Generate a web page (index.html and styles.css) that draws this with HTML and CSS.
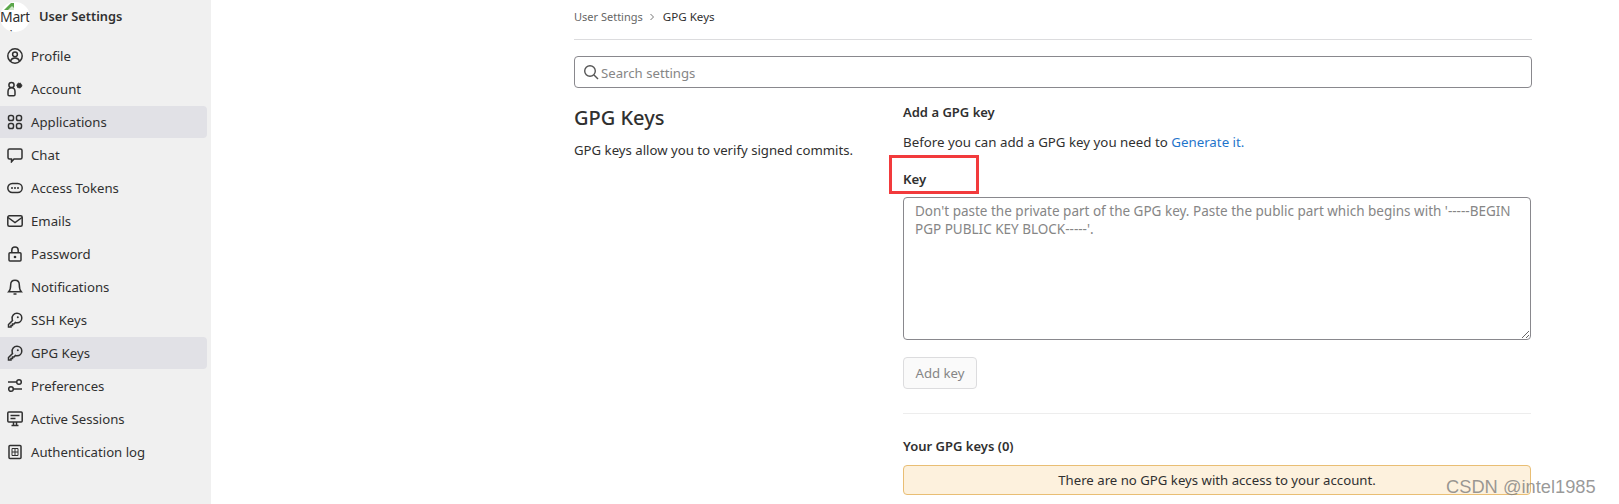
FILE: index.html
```html
<!DOCTYPE html>
<html>
<head>
    <title>GPG Keys</title>
    <meta name="viewport" content="width=device-width, initial-scale=1.0">
    <link rel="stylesheet" href="styles.css">
</head>
<body>
    <div class="page">
        <aside class="sidebar">
            <div class="context">
                <div class="avatar">
                    <svg class="broken" width="14" height="7" viewBox="0 0 14 7"><path d="M2 7 L9 0 L12 0 L12 7 Z" fill="#5aa64a"/><path d="M6 7 L10 3 L12 5 L12 7 Z" fill="#cfe6c8"/></svg>
                    <span>Mart in</span>
                </div>
                <strong>User Settings</strong>
            </div>
            <nav class="nav">
                <a class="nav-item">
                    <svg class="icon" viewBox="0 0 16 16"><circle cx="8" cy="8" r="7.2"/><circle cx="8" cy="6.3" r="2.4"/><path d="M3.5 13c.8-2.2 2.4-3 4.5-3s3.700.8 4.500 3"/></svg>
                    Profile
                </a>
                <a class="nav-item">
                    <svg class="icon" viewBox="0 0 16 16"><circle cx="4.500" cy="4" r="2.600"/><path d="M4.500 6.800c-2.200 0-3.500 1.800-3.500 4v2.700c0 .8.600 1.300 1.200 1.300h4.600c.6 0 1.200-.5 1.200-1.300v-2.700c0-2.200-1.300-4-3.500-4z"/><circle class="gear" cx="12.300" cy="4.500" r="2.500"/></svg>
                    Account
                </a>
                <a class="nav-item active">
                    <svg class="icon" viewBox="0 0 16 16"><rect x="1.500" y="1.500" width="5" height="5" rx="1.800"/><rect x="9.500" y="1.500" width="5" height="5" rx="1.800"/><rect x="1.500" y="9.500" width="5" height="5" rx="1.800"/><rect x="9.500" y="9.500" width="5" height="5" rx="1.800"/></svg>
                    Applications
                </a>
                <a class="nav-item">
                    <svg class="icon" viewBox="0 0 16 16"><path d="M2.500 2h11A1.500 1.500 0 0 1 15 3.500v7a1.500 1.500 0 0 1-1.500 1.500H7l-2.500 2.800V12h-2A1.500 1.500 0 0 1 1 10.500v-7A1.500 1.500 0 0 1 2.500 2z"/></svg>
                    Chat
                </a>
                <a class="nav-item">
                    <svg class="icon" viewBox="0 0 16 16"><rect x="0.800" y="3.500" width="14.400" height="9" rx="4.500"/><circle class="solid" cx="5" cy="8" r="1"/><circle class="solid" cx="8" cy="8" r="1"/><circle class="solid" cx="11" cy="8" r="1"/></svg>
                    Access Tokens
                </a>
                <a class="nav-item">
                    <svg class="icon" viewBox="0 0 16 16"><rect x="0.800" y="2.800" width="14.400" height="10.400" rx="1.500"/><path d="M1 4.500l7 5 7-5"/></svg>
                    Emails
                </a>
                <a class="nav-item">
                    <svg class="icon" viewBox="0 0 16 16"><rect x="2" y="6.800" width="12" height="8.200" rx="1"/><path d="M4.800 6.800V4.200a3.200 3.200 0 0 1 6.400 0v2.600"/><circle class="solid" cx="8" cy="11" r="1.300"/></svg>
                    Password
                </a>
                <a class="nav-item">
                    <svg class="icon" viewBox="0 0 16 16"><path d="M8 1.200c-2.700 0-4.300 2-4.300 4.500 0 3.500-.6 5.500-2 7h12.600c-1.400-1.500-2-3.500-2-7 0-2.500-1.600-4.500-4.300-4.500z"/><path d="M6.500 15h3"/></svg>
                    Notifications
                </a>
                <a class="nav-item">
                    <svg class="icon" viewBox="0 0 16 16"><path d="M10 1.200a4.800 4.800 0 0 1 0 9.600c-.6 0-1.100-.1-1.600-.3L7 12H5.500v1.500H4V15H1.500v-2.500l4-4c-.2-.5-.3-1-.3-1.500A4.800 4.800 0 0 1 10 1.200z"/><circle class="solid" cx="10.800" cy="5.200" r="1"/></svg>
                    SSH Keys
                </a>
                <a class="nav-item active">
                    <svg class="icon" viewBox="0 0 16 16"><path d="M10 1.200a4.800 4.800 0 0 1 0 9.600c-.6 0-1.100-.1-1.600-.3L7 12H5.500v1.500H4V15H1.500v-2.500l4-4c-.2-.5-.3-1-.3-1.500A4.800 4.800 0 0 1 10 1.200z"/><circle class="solid" cx="10.800" cy="5.200" r="1"/></svg>
                    GPG Keys
                </a>
                <a class="nav-item">
                    <svg class="icon" viewBox="0 0 16 16"><path d="M1 4h8.700M6.300 11H15"/><circle cx="12" cy="4" r="2.300"/><circle cx="4" cy="11" r="2.300"/></svg>
                    Preferences
                </a>
                <a class="nav-item">
                    <svg class="icon" viewBox="0 0 16 16"><rect x="0.800" y="1" width="14.400" height="10" rx="1"/><path d="M3.500 4.500h9M3.500 7.500h5M6.500 11v3M9.500 11v3M4.500 14.500h7"/></svg>
                    Active Sessions
                </a>
                <a class="nav-item">
                    <svg class="icon" viewBox="0 0 16 16"><rect x="2" y="1.500" width="12" height="13" rx="1"/><path class="thin" d="M5 4.500h6v7H5zM5 8h6M8 4.500v7"/></svg>
                    Authentication log
                </a>
            </nav>
        </aside>

        <main class="content">
            <div class="breadcrumbs">
                <span class="crumb">User Settings</span>
                <svg class="chevron" viewBox="0 0 8 8"><path d="M2.500 1l3 3-3 3"/></svg>
                <span class="crumb-current">GPG Keys</span>
            </div>

            <div class="search-box">
                <svg class="search-icon" viewBox="0 0 16 16"><circle cx="7" cy="7" r="5.300"/><path d="M11 11l4 4"/></svg>
                <span class="search-text">Search settings</span>
            </div>

            <div class="columns">
                <div class="intro">
                    <h2>GPG Keys</h2>
                    <p>GPG keys allow you to verify signed commits.</p>
                </div>
                <div class="panel">
                    <h5>Add a GPG key</h5>
                    <p class="before">Before you can add a GPG key you need to <a class="link">Generate it.</a></p>
                    <label class="key-label">Key</label>
                    <textarea class="key-input" placeholder="Don't paste the private part of the GPG key. Paste the public part which begins with '-----BEGIN PGP PUBLIC KEY BLOCK-----'."></textarea>
                    <button class="add-btn" disabled>Add key</button>
                    <hr class="divider">
                    <h5 class="keys-title">Your GPG keys (0)</h5>
                    <div class="empty-alert">There are no GPG keys with access to your account.</div>
                </div>
            </div>
        </main>
    </div>

    <div class="highlight"></div>
    <div class="watermark">CSDN @intel1985</div>
</body>
</html>
```

FILE: styles.css
```css
* {
    box-sizing: border-box;
}

html, body {
    height: 100%;
}

body {
    margin: 0;
    font-family: "Noto Sans", sans-serif;
    font-size: 13.2px;
    color: #303030;
    background: #fff;
    overflow: hidden;
    position: relative;
}

.page {
    display: flex;
    height: 504px;
}

/* Sidebar */
.sidebar {
    width: 211px;
    flex-shrink: 0;
    background: #f0f0f0;
}

.context {
    display: flex;
    align-items: center;
    gap: 9px;
    height: 32px;
    margin-bottom: 8px;
}

.context strong {
    font-size: 12.8px;
    font-weight: 600;
}

.avatar {
    position: relative;
    width: 30px;
    height: 30px;
    margin-top: 1px;
    border-radius: 50%;
    background: #fff;
    overflow: hidden;
    font-size: 14px;
    letter-spacing: -0.4px;
    line-height: 19px;
    padding-top: 5px;
    text-align: center;
    word-spacing: 30px;
}

.broken {
    position: absolute;
    left: 2px;
    top: 1px;
}

.nav {
    display: flex;
    flex-direction: column;
    gap: 1px;
}

.nav-item {
    display: flex;
    align-items: center;
    gap: 8px;
    height: 32px;
    width: 207px;
    padding-left: 7px;
    border-radius: 0 4px 4px 0;
    color: #303030;
}

.nav-item.active {
    background: #e1e1e6;
}

.icon {
    width: 16px;
    height: 16px;
    fill: none;
    stroke: #303030;
    stroke-width: 1.5;
    flex-shrink: 0;
}

.icon .solid {
    fill: #303030;
    stroke: none;
}

.icon .gear {
    fill: #303030;
    stroke: #303030;
    stroke-width: 1;
    stroke-dasharray: 1.4 1;
}

.icon .thin {
    stroke-width: 1;
}

/* Main column */
.content {
    width: 958px;
    margin-left: 363px;
}

.breadcrumbs {
    display: flex;
    align-items: center;
    height: 40px;
    border-bottom: 1px solid #dcdcde;
    padding-bottom: 6px;
    font-size: 11.600px;
}

.crumb {
    font-size: 11px;
    color: #666;
}

.chevron {
    width: 8px;
    height: 8px;
    margin: 0 7px 0 5px;
    fill: none;
    stroke: #777;
    stroke-width: 1;
}

.search-box {
    display: flex;
    align-items: center;
    gap: 2px;
    height: 32px;
    margin-top: 16px;
    padding-left: 8px;
    border: 1px solid #89888d;
    border-radius: 4px;
}

.search-icon {
    width: 16px;
    height: 16px;
    fill: none;
    stroke: #555;
    stroke-width: 1.4;
}

.search-text {
    padding-top: 2px;
    color: #868686;
}

.columns {
    display: flex;
    margin-top: 14px;
}

.intro {
    width: 329px;
    flex-shrink: 0;
}

.intro h2 {
    margin: 1px 0 7px;
    font-size: 20px;
    font-weight: 500;
    line-height: 30px;
}

.intro p {
    margin: 0;
    line-height: 20px;
}

.panel {
    width: 628px;
}

.panel h5 {
    margin: 0;
    font-size: 13px;
    font-weight: 600;
    line-height: 20px;
}

.before {
    margin: 10px 0 0;
    font-size: 13.3px;
    line-height: 20px;
}

.link {
    color: #1f75cb;
}

.key-label {
    display: block;
    margin-top: 17px;
    font-weight: 600;
    line-height: 20px;
}

.key-input {
    display: block;
    width: 628px;
    height: 143px;
    margin-top: 8px;
    padding: 5px 11px;
    border: 1px solid #89888d;
    border-radius: 4px;
    font-family: inherit;
    font-size: 13.5px;
    line-height: 17.500px;
    resize: vertical;
}

.key-input::placeholder {
    color: #868686;
}

.add-btn {
    display: block;
    width: 74px;
    height: 32px;
    margin-top: 17px;
    border: 1px solid #dcdcde;
    border-radius: 4px;
    background: #fafafa;
    color: #868686;
    font-family: inherit;
    font-size: 13.2px;
}

.divider {
    height: 1px;
    margin: 24px 0 0;
    border: 0;
    background: #ededed;
}

.panel .keys-title {
    margin-top: 22px;
}

.empty-alert {
    height: 30px;
    margin-top: 9px;
    border: 1px solid #e9be74;
    border-radius: 4px;
    background: #fdf1dd;
    text-align: center;
    line-height: 28px;
}

/* Annotation and watermark on top of the screenshot */
.highlight {
    position: absolute;
    left: 889px;
    top: 155px;
    width: 90px;
    height: 39px;
    border: 3px solid #f23a3c;
}

.watermark {
    position: absolute;
    left: 1446px;
    top: 476px;
    font-family: "Liberation Sans", sans-serif;
    font-size: 18.300px;
    line-height: 22px;
    color: rgba(120, 120, 120, 0.75);
}
```
